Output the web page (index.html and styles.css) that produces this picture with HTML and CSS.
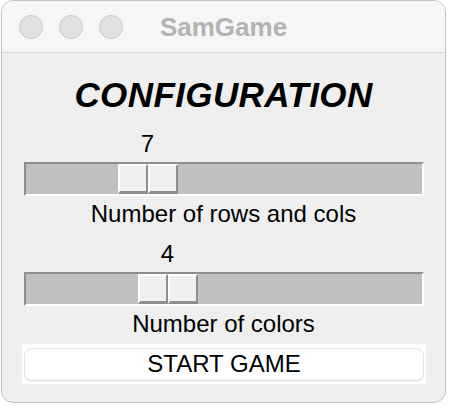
FILE: index.html
```html
<!DOCTYPE html>
<html>
<head>
<meta charset="utf-8">
<link rel="stylesheet" href="styles.css">
</head>
<body>
<div class="window">
  <div class="titlebar">
    <div class="lights">
      <span class="light"></span><span class="light"></span><span class="light"></span>
    </div>
    <div class="title">SamGame</div>
  </div>
  <div class="content">
    <h1 class="heading">CONFIGURATION</h1>

    <div class="scale">
      <div class="value-row"><span class="value" style="margin-left:92px">7</span></div>
      <div class="track"><div class="thumb" style="margin-left:92px"><span class="half"></span><span class="half"></span></div></div>
      <div class="caption">Number of rows and cols</div>
    </div>

    <div class="scale">
      <div class="value-row"><span class="value" style="margin-left:112px">4</span></div>
      <div class="track"><div class="thumb" style="margin-left:112px"><span class="half"></span><span class="half"></span></div></div>
      <div class="caption">Number of colors</div>
    </div>

    <div class="btn-wrap"><button class="btn">START GAME</button></div>
  </div>
</div>
</body>
</html>
```
FILE: styles.css
```css
html, body {
  margin: 0;
  padding: 0;
  background: #ffffff;
}
body {
  width: 450px;
  height: 406px;
  overflow: hidden;
  font-family: "Liberation Sans", Arial, sans-serif;
}
.window {
  margin-left: 1px;
  width: 443px;
  height: 401px;
  border: 1px solid #c2c2c2;
  border-radius: 12px;
  overflow: hidden;
  background: #efefef;
  display: flex;
  flex-direction: column;
}
.titlebar {
  height: 51px;
  border-bottom: 1px solid #d4d4d4;
  background: #f6f6f6;
  display: flex;
  align-items: center;
  position: relative;
}
.lights {
  display: flex;
  gap: 16px;
  padding-left: 17px;
}
.light {
  width: 22px;
  height: 22px;
  border-radius: 50%;
  background: #e1e1e1;
  border: 1px solid #c8c8c8;
}
.title {
  position: absolute;
  left: 0;
  right: 0;
  top: 12px;
  text-align: center;
  font-weight: bold;
  font-size: 26px;
  line-height: 28px;
  color: #b3b3b3;
  pointer-events: none;
}
.content {
  flex: 1;
  padding-top: 24px;
  display: flex;
  flex-direction: column;
}
.heading {
  margin: 0;
  text-align: center;
  font-size: 35px;
  line-height: 36px;
  font-weight: bold;
  font-style: italic;
  letter-spacing: 0.4px;
  color: #000;
}
.scale {
  display: flex;
  flex-direction: column;
  align-items: center;
}
.scale:first-of-type {
  margin-top: 17px;
}
.scale + .scale {
  margin-top: 12px;
}
.value-row {
  width: 400px;
  display: flex;
  padding-left: 2px;
  box-sizing: border-box;
}
.value {
  width: 60px;
  text-align: center;
  font-size: 24px;
  line-height: 28px;
  color: #000;
}
.track {
  margin-top: 4px;
  width: 400px;
  height: 34px;
  box-sizing: border-box;
  background: #c0c0c0;
  border-top: 2px solid #8e8e8e;
  border-left: 2px solid #8e8e8e;
  border-bottom: 2px solid #ffffff;
  border-right: 2px solid #ffffff;
  display: flex;
}
.thumb {
  width: 60px;
  height: 30px;
  display: flex;
}
.half {
  flex: 1;
  background: #f0f0f0;
  border-top: 2px solid #ffffff;
  border-left: 2px solid #ffffff;
  border-right: 2px solid #8e8e8e;
  border-bottom: 3px solid #8e8e8e;
}
.caption {
  margin-top: 4px;
  font-size: 24px;
  line-height: 28px;
  color: #000;
  text-align: center;
}
.btn-wrap {
  margin: 6px 0 0 20px;
  width: 404px;
  height: 40px;
  background: #ffffff;
  display: flex;
  align-items: center;
  justify-content: center;
}
.btn {
  width: 400px;
  height: 33px;
  border: 1px solid #e2e2e2;
  border-radius: 8px;
  background: #ffffff;
  box-shadow: 0 1px 1px rgba(0,0,0,0.06);
  font-family: "Liberation Sans", Arial, sans-serif;
  font-size: 24px;
  line-height: 28px;
  color: #000;
  padding: 0;
}
```
